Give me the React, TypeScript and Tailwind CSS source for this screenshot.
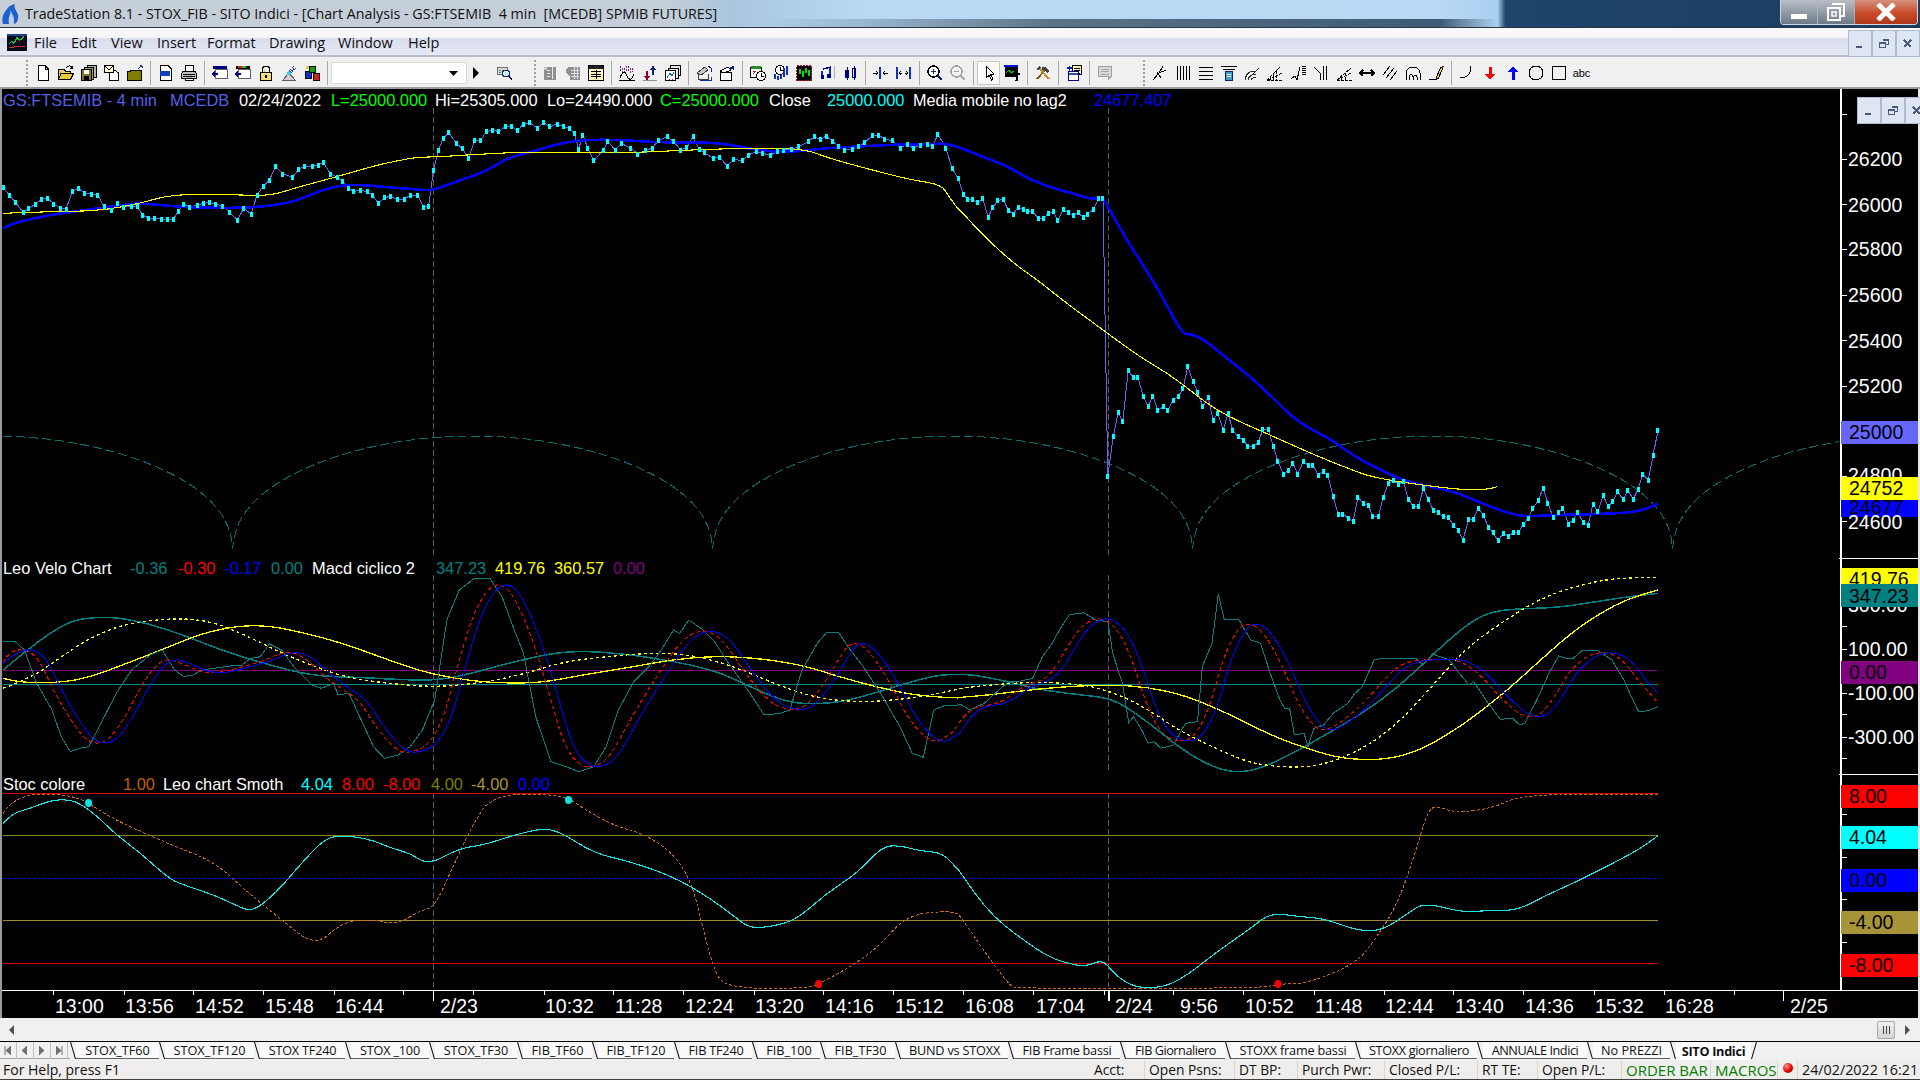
import React from "react";

type P = [number, number];
const z = (arr: number[], sx: number, ox: number, oy: number): P[] => {
  const out: P[] = [];
  for (let i = 0; i < arr.length; i += 2) out.push([ox + arr[i] / sx, oy + arr[i + 1] / 3]);
  return out;
};
const S9 = 1568 / 960;
const S8 = 1568 / 760;
const a = (l: number[], r: number[], top: number) => [...z(l, S9, 0, top), ...z(r, S8, 960, top)];
const pts = (p: P[]) => p.map(([x, y]) => `${x.toFixed(1)},${y.toFixed(1)}`).join(" ");
const smooth = (p: P[]) => {
  let d = `M${p[0][0].toFixed(1)} ${p[0][1].toFixed(1)}`;
  for (let i = 1; i < p.length - 1; i++) {
    const mx = (p[i][0] + p[i + 1][0]) / 2;
    const my = (p[i][1] + p[i + 1][1]) / 2;
    d += `Q${p[i][0].toFixed(1)} ${p[i][1].toFixed(1)} ${mx.toFixed(1)} ${my.toFixed(1)}`;
  }
  const e = p[p.length - 1];
  return d + `L${e[0].toFixed(1)} ${e[1].toFixed(1)}`;
};

const price = a(
  [5,262,15,285,26,308,38,338,47,325,58,312,68,298,78,295,88,312,98,325,108,327,118,275,128,265,138,280,150,282,160,285,170,320,182,332,192,310,202,322,214,318,224,320,233,345,243,355,253,355,263,357,273,357,283,357,291,335,300,312,310,322,322,316,332,310,342,308,352,312,364,318,375,338,388,360,398,325,410,342,420,285,430,258,440,240,450,200,462,222,478,232,488,208,498,198,510,198,520,195,528,187,540,222,552,232,560,245,570,265,578,275,588,270,600,275,608,285,618,310,628,292,638,290,650,298,660,298,670,285,682,285,692,322,700,318,708,210,716,150,724,115,733,98,745,130,755,145,765,175,775,122,785,120,795,95,805,90,815,95,825,80,835,78,845,92,855,72,865,68,878,85,888,68,898,80,910,72,920,80,930,85,938,100,945,148,952,105,960,145,970,182,985,150,993,125,1005,150,1015,130,1030,145,1042,162,1055,150,1065,145,1075,122,1090,110,1100,125,1112,150,1122,142,1132,110,1142,148,1150,158,1165,175,1175,172,1188,198,1198,178,1212,182,1222,165,1235,155,1245,160,1258,165,1270,155,1280,150,1293,148,1305,140,1320,125,1330,110,1340,118,1350,108,1360,125,1370,138,1380,150,1392,148,1402,140,1412,128,1425,107,1435,105,1445,118,1458,122,1470,145,1482,133,1492,145,1503,135,1515,132,1523,140,1532,102,1545,145,1555,205,1565,235],
  [7,282,15,298,26,298,37,308,47,295,58,352,68,322,78,302,89,298,100,332,110,342,120,322,130,328,140,335,150,335,161,354,172,356,182,340,192,335,202,360,213,328,223,338,234,345,244,338,254,352,264,342,275,328,286,296,295,296,305,1128,316,1010,326,938,336,963,347,812,357,832,367,832,378,888,388,920,398,888,408,932,419,920,429,930,440,900,450,890,460,865,470,800,481,845,491,878,501,920,512,892,522,960,532,940,543,990,553,940,563,992,574,1010,584,1020,594,1038,605,1040,615,1028,625,988,636,988,646,1038,656,1085,667,1122,677,1112,687,1090,697,1122,708,1085,718,1095,728,1095,739,1125,749,1115,759,1125,770,1190,780,1242,790,1242,801,1255,811,1265,821,1192,832,1210,842,1215,852,1250,863,1250,873,1192,884,1150,894,1142,904,1152,915,1145,925,1198,935,1218,946,1220,956,1165,966,1198,977,1232,987,1238,997,1250,1007,1252,1018,1275,1028,1292,1038,1320,1049,1258,1059,1258,1069,1225,1080,1245,1090,1282,1100,1298,1110,1322,1121,1300,1131,1310,1141,1298,1152,1298,1162,1272,1172,1255,1182,1225,1193,1202,1203,1165,1213,1210,1224,1253,1234,1238,1244,1225,1255,1272,1265,1260,1275,1238,1286,1268,1296,1275,1306,1212,1316,1235,1327,1185,1337,1220,1347,1205,1357,1175,1368,1198,1378,1172,1389,1197,1399,1168,1409,1122,1420,1140,1430,1065,1440,992],
  100
);
const blueMA = a(
  [5,385,20,370,50,358,80,345,120,335,160,325,200,315,225,310,250,313,290,320,340,323,380,324,420,321,450,315,480,305,510,282,540,262,570,254,600,256,640,263,680,268,705,272,730,255,760,235,785,220,810,195,835,170,870,155,900,138,930,125,960,119,1020,120,1060,126,1100,127,1150,127,1190,133,1220,145,1260,155,1300,155,1330,148,1370,142,1420,138,1470,133,1520,133,1545,130,1565,142],
  [0,143,50,172,100,200,130,228,180,260,240,283,265,296,295,296,300,306,340,410,375,490,410,570,458,702,475,702,500,715,540,762,600,832,640,885,680,945,720,985,765,1018,815,1070,860,1105,920,1145,1020,1175,1060,1200,1130,1240,1170,1250,1220,1245,1300,1243,1385,1238,1420,1225,1440,1210],
  100
);
const yellowMA = a(
  [5,340,75,335,160,333,230,310,265,290,305,283,380,284,440,288,480,265,520,245,570,220,610,198,650,182,680,172,720,170,790,162,870,155,950,159,1030,158,1100,152,1200,145,1310,145,1350,172,1400,198,1450,222,1490,240,1538,254,1550,290,1565,328],
  [0,330,50,410,115,495,160,540,220,610,300,695,370,770,440,830,530,935,640,1005,720,1058,800,1105,850,1132,950,1155,1040,1170,1090,1168,1108,1160],
  100
);
const tealFast = a(
  [5,245,25,245,40,270,60,370,85,450,100,530,115,575,130,565,145,560,165,490,190,400,215,330,245,285,265,270,285,330,300,350,315,345,330,330,350,325,375,318,395,315,410,295,425,290,440,252,460,270,480,320,510,375,525,385,545,370,552,405,570,400,590,480,610,560,628,595,650,585,670,560,690,510,710,420,730,180,750,90,775,55,800,55,820,110,840,210,855,280,875,470,900,605,925,620,945,635,970,620,990,560,1010,450,1035,365,1060,320,1080,270,1100,210,1110,220,1125,180,1145,205,1165,240,1190,310,1225,400,1248,465,1275,460,1290,450,1310,330,1335,250,1350,218,1370,218,1385,260,1410,320,1440,405,1470,500,1490,580,1508,592,1525,450,1545,435,1565,435],
  [0,432,20,450,50,430,80,390,100,365,120,365,150,355,170,290,190,250,205,210,225,165,255,158,280,180,305,185,315,280,335,370,348,488,358,470,375,510,388,550,400,545,415,565,440,555,465,490,490,485,500,320,520,250,533,102,545,178,575,178,600,240,620,250,640,340,660,420,670,445,680,445,690,525,710,520,718,560,730,505,750,495,770,460,800,430,815,400,830,380,855,298,890,295,905,295,940,295,955,315,975,282,1010,300,1030,340,1050,375,1060,365,1085,420,1115,478,1140,475,1155,495,1165,490,1190,420,1215,340,1235,288,1250,295,1265,295,1285,270,1315,270,1345,300,1370,360,1385,410,1400,455,1420,452,1440,440],
  560
);
const blueThin = a(
  [5,310,25,280,50,265,75,290,100,390,125,470,150,535,170,553,190,540,215,480,240,390,265,320,285,295,310,310,340,335,365,340,400,325,440,305,480,273,510,290,540,345,570,385,600,420,630,510,660,570,680,580,710,560,735,490,760,320,785,165,810,85,830,70,850,100,880,220,910,400,935,560,960,618,985,622,1010,590,1045,470,1085,350,1130,230,1165,208,1195,240,1230,340,1270,430,1305,452,1330,440,1360,370,1390,275,1405,245,1430,265,1465,360,1500,490,1540,555,1565,520],
  [0,520,25,465,50,440,80,435,110,420,150,375,190,360,215,320,250,230,280,183,310,173,340,205,370,290,400,430,430,520,470,548,500,530,530,450,560,290,590,205,610,188,640,210,680,310,710,420,740,490,765,515,800,490,850,430,890,360,930,305,1000,297,1040,298,1080,330,1130,410,1175,470,1210,470,1240,420,1270,340,1310,285,1350,275,1385,300,1420,370,1440,400],
  560
);
const redThin: P[] = blueThin.map(([x, y]) => [Math.max(3, x - 8), y] as P).filter(([x]) => x < 1650);
redThin.push([1658, 560 + 428 / 3]);
const yellowSlow = a(
  [5,355,30,368,100,368,150,350,200,315,270,265,330,220,390,197,440,197,500,220,560,250,620,290,680,330,740,355,800,368,880,370,950,345,1030,322,1100,298,1170,288,1240,295,1310,315,1370,350,1430,380,1490,405,1565,415],
  [0,412,60,405,130,392,200,382,270,376,350,376,420,390,480,415,560,465,640,525,720,568,790,597,880,600,950,570,1010,520,1060,470,1130,390,1190,310,1260,220,1320,160,1380,115,1440,90],
  560
);
const yellowDot = a(
  [5,385,50,355,100,290,150,230,200,195,250,180,300,175,350,187,400,225,450,270,500,310,560,350,630,370,710,382,790,368,860,340,920,305,1000,288,1070,278,1130,285,1200,320,1270,375,1340,418,1420,427,1500,412,1565,388],
  [0,385,60,375,150,366,220,370,270,378,330,405,390,450,450,510,520,560,590,605,650,620,720,622,780,600,850,550,910,480,970,385,1040,270,1110,195,1180,130,1240,92,1300,68,1360,54,1440,52],
  560
);
const tealSlow = a(
  [5,330,50,260,110,185,150,172,190,172,240,190,300,225,360,270,430,310,510,348,590,352,660,360,720,360,770,340,830,310,900,280,950,273,1010,280,1070,295,1130,315,1180,340,1230,385,1290,430,1350,432,1400,415,1470,375,1530,345,1565,343],
  [0,343,30,345,100,365,150,385,230,402,300,412,340,437,400,500,450,560,500,605,540,630,580,637,620,625,680,585,760,520,840,450,900,385,950,320,1000,250,1050,190,1090,158,1140,147,1230,143,1300,128,1370,112,1440,100],
  560
);
const cyanStoch = a(
  [5,790,20,760,50,745,80,722,110,718,130,730,160,770,190,825,230,880,275,955,300,975,350,1005,390,1040,413,1055,450,1000,490,915,525,845,550,825,600,835,640,865,670,880,700,915,750,865,790,855,840,825,885,805,915,815,970,880,1030,905,1100,950,1160,1015,1200,1070,1225,1105,1260,1100,1300,1080,1350,1000,1400,940,1440,860,1470,856,1500,872,1540,878,1565,930],
  [0,935,30,1000,70,1070,110,1118,175,1185,220,1210,260,1220,295,1198,320,1245,360,1283,420,1283,470,1245,530,1175,600,1105,640,1058,700,1070,750,1075,820,1112,870,1112,920,1065,957,1027,1035,1057,1080,1052,1150,1052,1210,1005,1280,960,1400,870,1440,827],
  560
);
const orange = a(
  [5,760,25,702,120,702,170,760,200,790,280,855,350,905,400,990,460,1080,515,1160,560,1085,610,1078,645,1095,690,1050,710,1040,740,920,770,800,805,702,920,702,960,755,1010,802,1050,820,1100,880,1130,970,1145,1080,1165,1225,1185,1285,1320,1285,1337,1272,1380,1230,1430,1170,1480,1067,1540,1053,1565,1060],
  [0,1070,30,1130,65,1205,105,1280,120,1285,620,1285,655,1272,720,1270,820,1208,860,1130,900,1040,935,900,965,750,985,738,1020,758,1100,745,1160,702,1440,702],
  560
);

const arcs = (() => {
  const out: P[] = [];
  for (let x = 3; x <= 1840; x += 1.5) {
    const s = Math.abs(Math.sin((Math.PI * (x - 232.7)) / 480));
    out.push([x, 557 - 121 * Math.pow(s, 0.4)]);
  }
  return out;
})();

const majorTicks = [53,124,193.5,263,334,403.5,473,544,613.6,683,754,823.6,893.5,963,1033.5,1104,1173,1243.5,1314,1384,1453.6,1523,1594,1664,1734];
const axisTicks = [114,159,204,249,295,340,386,431,476,521,605,626.5,649,693,714.6,737,758.6,814.5,857,899.4,942];

function ChartSvg() {
  return (
    <svg className="absolute inset-0" width="1920" height="929" viewBox="0 89 1920 929">
      <rect x="0" y="89" width="2" height="929" fill="#9a9a9a" />
      <rect x="1918" y="89" width="2" height="929" fill="#e8e8e8" />
      <g shapeRendering="crispEdges" fill="none">
        <path d="M433.5 108V555M433.5 575V770M433.5 793V987M1108.5 108V555M1108.5 575V770M1108.5 793V987" stroke="#5a5a5a" strokeDasharray="6 3" />
        <polyline points={pts(arcs)} stroke="#0b6e70" strokeDasharray="9 4" />
        <polyline points={pts(price)} stroke="#6d62ee" />
        <path d={smooth(blueMA)} stroke="#0000ff" strokeWidth="2.6" />
        <path d={smooth(yellowMA)} stroke="#ffff00" strokeWidth="1.1" />
        {price.map(([x, y], i) => (
          <rect key={i} x={x - 1.5} y={y - 2.5} width="3" height="5" fill="#00ffff" />
        ))}
        <path d="M3 670.5H1658" stroke="#800080" strokeWidth="1.5" />
        <path d="M3 684.5H1658" stroke="#008b8b" strokeWidth="1.5" />
        <path d={smooth(tealSlow)} stroke="#008080" strokeWidth="1.5" />
        <path d={smooth(yellowDot)} stroke="#ffff00" strokeWidth="1.3" strokeDasharray="3 3" />
        <path d={smooth(yellowSlow)} stroke="#ffff00" strokeWidth="1.3" />
        <polyline points={pts(tealFast)} stroke="#0b7f7f" />
        <path d={smooth(redThin)} stroke="#ff0000" strokeDasharray="4 3" />
        <path d={smooth(blueThin)} stroke="#0000ff" />
        <path d="M3 793.5H1658" stroke="#e00000" strokeWidth="1.4" />
        <path d="M3 835.5H1658" stroke="#86861a" strokeWidth="1.4" />
        <path d="M3 878.5H1658" stroke="#0000ff" strokeWidth="1.6" strokeDasharray="3 2" />
        <path d="M3 920.5H1658" stroke="#a08c30" strokeWidth="1.4" />
        <path d="M3 963.5H1658" stroke="#e00000" strokeWidth="1.4" />
        <path d={smooth(orange)} stroke="#cc6a10" strokeDasharray="3 2" />
        <path d={smooth(cyanStoch)} stroke="#19e6e6" strokeWidth="1.1" />
      </g>
      <ellipse cx="88.5" cy="803" rx="3.5" ry="4" fill="#00e8e8" />
      <ellipse cx="568.5" cy="800" rx="3.5" ry="4" fill="#00e8e8" />
      <ellipse cx="818.5" cy="984" rx="3.5" ry="4" fill="#ff0000" />
      <ellipse cx="1278" cy="984" rx="3.5" ry="4" fill="#ff0000" />
      <g stroke="#ffffff" shapeRendering="crispEdges" fill="none">
        <path d="M2 990.5H1918" strokeWidth="1.5" />
        <path d="M1841 89V990" strokeWidth="1.5" />
        <path d="M1839 558.5H1918M1839 774.5H1918" strokeWidth="1.5" />
        <path d="M433.5 991V1001M1109 991V1001M1783.5 991V1001" strokeWidth="1.5" />
        {majorTicks.map((x) => (
          <path key={x} d={`M${x} 991V995`} />
        ))}
        {axisTicks.map((y) => (
          <path key={y} d={`M1841 ${y}H1847`} />
        ))}
      </g>
    </svg>
  );
}

type L = { t: string; c: number; cls?: string; top?: number; h?: number };
const axis1: L[] = [
  { t: "26200", c: 159 }, { t: "26000", c: 204.5 }, { t: "25800", c: 249 }, { t: "25600", c: 295 }, { t: "25400", c: 340.5 }, { t: "25200", c: 386 },
  { t: "25000", c: 432.5, cls: "bg-[#6666ff] text-black", top: 421, h: 23 },
  { t: "24800", c: 475 },
  { t: "24677", c: 507, cls: "bg-[#0000ff] text-black", top: 500, h: 17 },
  { t: "24752", c: 488.5, cls: "bg-[#ffff00] text-black", top: 477, h: 23 },
  { t: "24600", c: 522 },
];
const axis2: L[] = [
  { t: "419.76", c: 579, cls: "bg-[#ffff00] text-black", top: 568, h: 16 },
  { t: "300.00", c: 605 },
  { t: "347.23", c: 596, cls: "bg-[#008080] text-black", top: 584, h: 23 },
  { t: "100.00", c: 649 },
  { t: "0.00", c: 672.5, cls: "bg-[#800080] text-black", top: 661, h: 23 },
  { t: "-100.00", c: 693 },
  { t: "-300.00", c: 737 },
];
const axis3: L[] = [
  { t: "8.00", c: 796, cls: "bg-[#ff0000] text-black", top: 784.5, h: 23 },
  { t: "4.04", c: 837.5, cls: "bg-[#00ffff] text-black", top: 826, h: 23 },
  { t: "0.00", c: 880.5, cls: "bg-[#0000ff] text-black", top: 869, h: 23 },
  { t: "-4.00", c: 922.5, cls: "bg-[#a89438] text-black", top: 911, h: 23 },
  { t: "-8.00", c: 965.5, cls: "bg-[#ff0000] text-black", top: 954, h: 23 },
];

function AxisCol({ items, top }: { items: L[]; top: number }) {
  return (
    <div className="relative w-[77px] shrink-0 font-['Liberation_Sans',sans-serif] text-[19.5px]">
      {items.map((l) =>
        l.cls ? (
          <div
            key={l.t + l.c}
            className={`absolute left-0 right-0 overflow-hidden pl-[8px] ${l.cls}`}
            style={{ top: (l.top as number) - top, height: l.h, lineHeight: `${(l.c - (l.top as number)) * 2}px` }}
          >
            {l.t}
          </div>
        ) : (
          <div
            key={l.t}
            className="absolute left-0 right-0 h-[24px] pl-[7px] leading-[24px] whitespace-nowrap text-white"
            style={{ top: l.c - top - 12 }}
          >
            {l.t}
          </div>
        )
      )}
    </div>
  );
}

function LegendRow1() {
  return (
    <div className="flex h-[23px] items-center pl-[3px] font-['Liberation_Sans',sans-serif] text-[16.4px] whitespace-nowrap">
      <span className="w-[167px] text-[#5460e8]">GS:FTSEMIB - 4 min</span>
      <span className="w-[69px] text-[#5460e8]">MCEDB</span>
      <span className="w-[92px] text-white">02/24/2022</span>
      <span className="w-[104px] text-[#00ff00]">L=25000.000</span>
      <span className="w-[112px] text-white">Hi=25305.000</span>
      <span className="w-[113px] text-white">Lo=24490.000</span>
      <span className="w-[109px] text-[#00ff00]">C=25000.000</span>
      <span className="w-[58px] text-white">Close</span>
      <span className="w-[86px] text-[#00ffff]">25000.000</span>
      <span className="w-[181px] text-[16.2px] text-white">Media mobile no lag2</span>
      <span className="text-[#0000ff]">24677.407</span>
    </div>
  );
}
function LegendRow2() {
  return (
    <div className="flex h-[20px] items-center pl-[3px] font-['Liberation_Sans',sans-serif] text-[16.4px] whitespace-nowrap">
      <span className="w-[127px] text-white">Leo Velo Chart</span>
      <span className="w-[48px] text-[#008080]">-0.36</span>
      <span className="w-[46px] text-[#ff0000]">-0.30</span>
      <span className="w-[47px] text-[#0000ff]">-0.17</span>
      <span className="w-[41px] text-[#008080]">0.00</span>
      <span className="w-[124px] text-white">Macd ciclico 2</span>
      <span className="w-[59px] text-[#008080]">347.23</span>
      <span className="w-[59px] text-[#ffff00]">419.76</span>
      <span className="w-[59px] text-[#ffff00]">360.57</span>
      <span className="text-[#800080]">0.00</span>
    </div>
  );
}
function LegendRow3() {
  return (
    <div className="flex h-[20px] items-center pl-[3px] font-['Liberation_Sans',sans-serif] text-[16.4px] whitespace-nowrap">
      <span className="w-[120px] text-white">Stoc colore</span>
      <span className="w-[40px] text-[#c06000]">1.00</span>
      <span className="w-[138px] text-white">Leo chart Smoth</span>
      <span className="w-[41px] text-[#00ffff]">4.04</span>
      <span className="w-[41px] text-[#ff0000]">8.00</span>
      <span className="w-[48px] text-[#ff0000]">-8.00</span>
      <span className="w-[40px] text-[#808000]">4.00</span>
      <span className="w-[47px] text-[#a89438]">-4.00</span>
      <span className="text-[#0000ff]">0.00</span>
    </div>
  );
}

function TimeAxis() {
  const c = "shrink-0 w-[70px]";
  return (
    <div className="absolute bottom-0 left-0 right-0 flex h-[23px] items-center pl-[55px] font-['Liberation_Sans',sans-serif] text-[19.5px] text-white whitespace-nowrap">
      <span className={c}>13:00</span>
      <span className={c}>13:56</span>
      <span className={c}>14:52</span>
      <span className={c}>15:48</span>
      <span className="w-[105px] shrink-0">16:44</span>
      <span className="w-[105px] shrink-0">2/23</span>
      <span className={c}>10:32</span>
      <span className={c}>11:28</span>
      <span className={c}>12:24</span>
      <span className={c}>13:20</span>
      <span className={c}>14:16</span>
      <span className={c}>15:12</span>
      <span className="w-[71px] shrink-0">16:08</span>
      <span className="w-[79px] shrink-0">17:04</span>
      <span className="w-[65px] shrink-0">2/24</span>
      <span className="w-[65px] shrink-0">9:56</span>
      <span className={c}>10:52</span>
      <span className={c}>11:48</span>
      <span className={c}>12:44</span>
      <span className={c}>13:40</span>
      <span className={c}>14:36</span>
      <span className={c}>15:32</span>
      <span className="w-[125px] shrink-0">16:28</span>
      <span>2/25</span>
    </div>
  );
}

/* ---- toolbar icons ---- */
const O = "#000";
const I: Record<string, React.ReactNode> = {
  new: <path d="M3.5 .5H10L13.5 4V15.5H3.5Z M10 .5V4H13.5" fill="#fff" stroke={O} />,
  open: <><path d="M.5 14.5V4.5H6L7.5 6H12.5V8" fill="#f0d060" stroke={O} /><path d="M.5 14.5L3 8.5H15.5L12.5 14.5Z" fill="#e8c838" stroke={O} /><path d="M8 3C10 0 13 0 14 3M14 1V3.5H12" fill="none" stroke={O} /></>,
  saveall: <><rect x="6.5" y=".5" width="9" height="12" fill="#b0b0b0" stroke={O} /><rect x="3.5" y="2.5" width="9" height="12" fill="#a09858" stroke={O} /><rect x=".5" y="4.5" width="10" height="11" fill="#807828" stroke={O} /><rect x="3" y="5" width="5" height="4" fill="#fff" /><rect x="3" y="11" width="5" height="4" fill={O} /></>,
  clip: <><path d="M5.5 5.5H11L14.5 8V15.5H5.5Z" fill="#fff" stroke={O} /><rect x=".5" y=".5" width="9" height="7" fill="#fff8d0" stroke={O} /><path d="M1 1L5 5L9 1" fill="none" stroke={O} /></>,
  box: <><path d="M.5 15.5V6.5H3L4.5 5H14.5V15.5Z" fill="#808000" stroke={O} /><path d="M11 4L15 .5M15 .5H12.5M15 .5V3" stroke="#1030a0" fill="none" /></>,
  preview: <><path d="M2.5 .5H10L13.5 4V15.5H2.5Z" fill="#fff" stroke={O} /><rect x="2" y="6" width="10" height="5" fill="#1040c0" /></>,
  print: <><rect x="4.5" y=".5" width="8" height="6" fill="#fff" stroke={O} /><path d="M1.5 6.5H14.5L15.5 9.5V13.5H.5V9.5Z" fill="#c0c0c0" stroke={O} /><path d="M2 9H14M2 11H14" stroke={O} /><rect x="4.5" y="13" width="8" height="2.5" fill="#fff" stroke={O} /></>,
  win1: <><rect x="1" y="1" width="14" height="3" fill="#000080" /><rect x="3.5" y="4.5" width="12" height="9" fill="#fff" stroke="#606060" /><path d="M.5 9H6M3 6.5L.5 9L3 11.5" fill="none" stroke="#000080" strokeWidth="1.4" /></>,
  win2: <><rect x="1" y="1" width="14" height="3" fill="#000" /><rect x="3" y="1" width="4" height="2" fill="#e02020" /><rect x="7" y="1" width="4" height="2" fill="#20c020" /><rect x="3.5" y="4.5" width="12" height="9" fill="#fff" stroke="#606060" /><path d="M.5 9H6M3 6.5L.5 9L3 11.5" fill="none" stroke="#000080" strokeWidth="1.4" /></>,
  lock: <><path d="M4.5 7V4C4.5 .5 11.5 .5 11.5 4V7" fill="none" stroke={O} strokeWidth="1.2" /><path d="M6 7V4.5" stroke="#d8c020" /><rect x="2.5" y="7" width="11" height="8.5" fill="#f0e070" stroke={O} /><rect x="7" y="10" width="2" height="3" fill={O} /></>,
  sat: <><path d="M2 15L8 8L14 15Z" fill="#d0d0d0" stroke="#606060" /><circle cx="8" cy="8" r="2" fill="#30d0e0" /><path d="M8 6L13 1M9 7L15 2M10 8L15.5 3" stroke="#2040c0" strokeDasharray="1 1" /></>,
  cube: <><rect x="1" y="6" width="6" height="7" fill="#1030c0" stroke={O} /><rect x="5" y="1" width="6" height="6" fill="#10a010" stroke={O} /><rect x="9" y="8" width="6" height="7" fill="#d02020" stroke={O} /><rect x="2" y="1" width="3" height="3" fill="#e8d020" /></>,
  find: <><rect x=".5" y="2.5" width="10" height="7" fill="#d8d8d8" stroke="#707070" /><path d="M2 5H9M2 7H9" stroke="#707070" strokeDasharray="2 1" /><circle cx="9" cy="8.5" r="3.5" fill="#c8f0f8" stroke="#203070" /><path d="M11.5 11L15 14.5" stroke="#000080" strokeWidth="2" /></>,
  g1: <><rect x="1.5" y="1.5" width="12" height="13" fill="#909090" /><path d="M10 2V14M5 5H8M5 8H8M5 11H8" stroke="#e8e8e8" /><rect x="2" y="2" width="3" height="3" fill="#c8c8c8" /></>,
  g2: <><path d="M1 4L5 1.5H14.5V14.5H5V11L1 8Z" fill="#909090" /><path d="M6 5H14M6 8H14M6 11H14M9 2V14M12 2V14" stroke="#e0e0e0" /></>,
  tab: <><rect x=".5" y=".5" width="15" height="15" fill="#fff8c0" stroke={O} /><rect x="1" y="1" width="14" height="3" fill="#202020" /><path d="M3 6.5H13M3 9H13M3 11.5H13M8 5V14" stroke={O} /></>,
  wave: <><path d="M1 1V7M5 3V7M9 1V7M13 3V7" stroke="#2030c0" strokeDasharray="2 1" /><path d="M3 3V8M7 1V7M11 3V8" stroke="#d02020" strokeDasharray="2 1" /><path d="M1 13C4 5 6 6 8 11S13 15 15 9" fill="none" stroke={O} /><path d="M0 15H16" stroke={O} /></>,
  updn: <><path d="M5 6V13M3 11L5 14L7 11" stroke="#900020" fill="none" strokeWidth="1.5" /><path d="M11 3V10M9 5L11 2L13 5" stroke="#102080" fill="none" strokeWidth="1.5" /><path d="M1 15H15" stroke="#909090" /></>,
  windows: <><rect x="5.5" y=".5" width="10" height="10" fill="#e8e8e8" stroke={O} /><rect x="3" y="3" width="10" height="10" fill="#e8e8e8" stroke={O} /><rect x=".5" y="5.5" width="10" height="10" fill="#fff" stroke={O} /><path d="M2 13L5 8L7 11L9 7" fill="none" stroke="#1060c0" /><path d="M4 14H5M7 14H8" stroke="#d02020" /></>,
  fill1: <><path d="M1 8L9 2L12 5L5 10Z" fill="#c8c8c8" stroke="#404040" /><path d="M2 9V14H12V9" fill="none" stroke="#404040" /><path d="M12 1L15 3L15 7" stroke="#102080" fill="none" /><path d="M4 15H15V12" stroke="#1030a0" fill="none" /></>,
  fill2: <><path d="M1 6L9 2L12 5L5 8Z" fill="#fff" stroke={O} /><rect x="1.5" y="7.5" width="11" height="8" fill="#fff" stroke={O} /><path d="M10 3L15 .5V5Z" fill="#102080" /></>,
  cal: <><rect x=".5" y="2.5" width="11" height="10" fill="#fff" stroke={O} /><rect x="1" y="1" width="10" height="3" fill="#209020" /><path d="M3 6H5M3 9L6 6" stroke="#d02020" /><circle cx="11" cy="11" r="4.5" fill="#fff" stroke={O} /><path d="M11 8V11H14" stroke={O} fill="none" /></>,
  magbars: <><circle cx="7" cy="5" r="4.5" fill="#fff" stroke={O} /><path d="M7 2V5H10" stroke={O} fill="none" /><path d="M2 9V14M5 11V15M8 10V14M11 3V12M14 1V10" stroke="#1030c0" strokeWidth="1.4" /></>,
  blackchart: <><rect x=".5" y=".5" width="15" height="15" fill="#000" stroke="#a02020" strokeDasharray="2 1" /><path d="M4 4V9M7 6V12M10 3V8M13 5V11" stroke="#00e000" strokeWidth="1.4" /></>,
  music: <><path d="M3 6V12M11 3V10" stroke="#1030a0" strokeWidth="2" /><rect x="1.5" y="10" width="3" height="4" fill="#000080" /><rect x="8" y="9" width="4" height="4" fill="#000080" /><path d="M4 4L12 2" stroke="#000080" strokeWidth="1.5" /><path d="M15 1V14" stroke="#b0b0b0" /></>,
  candles: <><rect x="3" y="5" width="4" height="8" fill="#000080" /><path d="M5 2V15" stroke="#000080" /><rect x="10.5" y="3.5" width="3" height="9" fill="#f0f0f0" stroke="#000080" /><path d="M12 1V15" stroke="#000080" /></>,
  lr: <><path d="M7 2V14" stroke="#1030c0" strokeWidth="1.4" /><path d="M0 8H5M3 6L5 8L3 10M10 8H15M12 6L10 8L12 10" stroke={O} fill="none" /></>,
  rl: <><path d="M1 2V14M14 2V14" stroke="#1030c0" strokeWidth="1.4" /><path d="M3 8H6M5 6L3 8L5 10M9 8H12M10 6L12 8L10 10" stroke={O} fill="none" /></>,
  zin: <><circle cx="6.5" cy="6.5" r="5.5" fill="#fff" stroke={O} strokeWidth="1.5" /><path d="M4 6.5H9M6.5 4V9" stroke="#0a3090" strokeWidth="1.5" /><path d="M10.5 10.5L15 15" stroke="#102080" strokeWidth="2.4" /></>,
  zout: <><circle cx="6.5" cy="6.5" r="5.5" fill="#f4f4f4" stroke="#a0a0a0" strokeWidth="1.5" /><path d="M4 6.5H9" stroke="#a0a0a0" strokeWidth="1.5" /><path d="M10.5 10.5L15 15" stroke="#a8a8a8" strokeWidth="2.4" /></>,
  cursor: <path d="M5 1V13L8 10.5L10.5 15L12 14L9.5 9.5L13 9Z" fill="#fff" stroke={O} />,
  chartT: <><rect x=".5" y=".5" width="13" height="11" fill="#000" /><rect x="0" y="0" width="14" height="2" fill="#0010e0" /><path d="M2 8L5 5L7 8L10 6" stroke="#00d000" fill="none" /><path d="M9 9H16M12.5 9V16M11 16H14" stroke="#000" strokeWidth="2" fill="none" /></>,
  tools: <><path d="M2 14L11 4" stroke="#806020" strokeWidth="2" /><path d="M7 2L11 2L14 6L12 8L9 5L7 5Z" fill="#404040" /><path d="M4 3L14 14" stroke="#c09030" strokeWidth="2" /><path d="M2 5L5 2" stroke="#404040" strokeWidth="2" /></>,
  addwin: <><rect x="6.5" y=".5" width="9" height="9" fill="#fff8a0" stroke={O} /><path d="M8 3H14M8 5.5H14M8 8H14" stroke="#000" /><rect x="2.5" y="6.5" width="10" height="9" fill="#fff" stroke="#000080" /><path d="M1 3H6M3.5 .5V5.5" stroke="#0020c0" strokeWidth="1.6" /><rect x="3" y="8" width="9" height="2" fill="#3050b0" /></>,
  note: <><path d="M1.5 1.5H14.5V11L11 14.5V11.5H1.5Z" fill="#d8d8d8" stroke="#a0a0a0" /><path d="M4 4H12M4 6.5H12M4 9H12" stroke="#a8a8a8" /></>,
  d1: <path d="M1 15L7 8M7 8L11 1M7 8L14 5M5 7L9 13" stroke={O} fill="none" />,
  d2: <path d="M2 1V15M5 1V15M8 1V15M11 1V15M14 1V15" stroke={O} />,
  d3: <path d="M1 2H15M1 6H15M1 10H15M1 14H15" stroke={O} />,
  d4: <><path d="M0 1.5H16M2 4H14" stroke={O} /><rect x="4.5" y="6.5" width="7" height="9" fill="#40a0c0" stroke="#102080" /><path d="M6 9H10M6 11.5H10" stroke="#fff" /></>,
  d5: <path d="M1 15C2 8 7 5 12 7M4 15C5 11 8 9 12 10M7 15C8 13 10 12 12 13M4 14L15 3" stroke="#303030" fill="none" />,
  d6: <path d="M0 15H16M0 15L14 1M1 15L15 8M3 12V15M6 9V15M9 6V15" stroke={O} fill="none" strokeDasharray="3 1" />,
  d7: <path d="M1 14L5 11L7 15L10 2M12 1H16M12 3H16M12 5H16M12 7H16M12 9H16" stroke={O} fill="none" />,
  d8: <path d="M1 2L7 8V15M10 1V15M13 1V15" stroke={O} fill="none" />,
  d9: <path d="M1 15H16M1 15L15 3M1 15L15 8M5 12V15M9 8V15" stroke={O} fill="none" strokeDasharray="3 1" />,
  d10: <path d="M1 8H15M4 5L1 8L4 11M12 5L15 8L12 11" stroke={O} fill="none" strokeWidth="1.5" />,
  d11: <path d="M1 10L8 1M4 13L12 3M8 15L15 6" stroke={O} fill="none" />,
  d12: <path d="M1 15V8C1 0 15 0 15 8V15M4 15V12C4 9 8 9 8 12V15C8 9 12 9 12 12V15" stroke={O} fill="none" />,
  d13: <><path d="M1 14H9" stroke={O} /><path d="M8 13L13 2L15 3L10 14Z" fill="#f0d020" stroke={O} /><path d="M13 2L15 3L15.5 1.5L14 1Z" fill="#a01010" /></>,
  e1: <path d="M12 1C12 9 8 13 1 13" stroke={O} fill="none" />,
  e2: <path d="M6.5 2H9.5V9H13L8 15L3 9H6.5Z" fill="#ff0000" />,
  e3: <path d="M8 1L13 7H9.5V15H6.5V7H3Z" fill="#0000ff" />,
  e4: <circle cx="8" cy="8" r="7" fill="none" stroke={O} />,
  e5: <rect x="1.5" y="1.5" width="13" height="13" fill="none" stroke={O} />,
};

const Slot = ({ n, active }: { n: string; active?: boolean }) => (
  <div className={`flex h-[24px] w-[23px] shrink-0 items-center justify-center ${active ? "border border-[#c8c8c8] bg-[#fafafa]" : ""}`}>
    <svg width="16" height="16" viewBox="0 0 16 16" shapeRendering="crispEdges">{I[n]}</svg>
  </div>
);
const Sep = () => (
  <div className="flex h-[24px] w-[8px] shrink-0 justify-center">
    <div className="h-full w-px bg-[#a8a8a8]" />
  </div>
);
const Grip = ({ cls }: { cls: string }) => (
  <div className={`flex h-[26px] shrink-0 justify-center ${cls}`}>
    <div className="h-full w-[2px] border-l-2 border-dotted border-[#a0a0a0]" />
  </div>
);

function Toolbar() {
  const g1 = ["new","open","saveall","clip","box"];
  const g2 = ["preview","print"];
  const g3 = ["win1","win2","lock","sat","cube"];
  const g4 = ["g1","g2","tab"];
  const g6 = ["fill1","fill2"];
  const g7 = ["cal","magbars","blackchart","music","candles"];
  const g8 = ["lr","rl"];
  const g9 = ["zin","zout"];
  const g10 = ["d1","d2","d3","d4","d5","d6","d7","d8","d9","d10","d11","d12","d13"];
  const g11 = ["e1","e2","e3","e4","e5"];
  const r = (l: string[]) => l.map((n) => <Slot key={n} n={n} />);
  return (
    <div className="flex h-[32px] shrink-0 items-center border-b-2 border-[#9c9c9c] bg-[#f0f0f0] pl-[22px] pt-[2px]">
      <Grip cls="w-[9px]" />
      {r(g1)}<Sep />{r(g2)}<Sep />{r(g3)}<Sep />
      <div className="flex h-[22px] w-[136px] shrink-0 items-center justify-end rounded-[2px] border border-[#d8d8d8] bg-white pr-[8px]">
        <svg width="9" height="5" viewBox="0 0 9 5"><path d="M0 0H9L4.5 5Z" fill="#000" /></svg>
      </div>
      <div className="flex w-[26px] shrink-0 justify-start pl-[6px]">
        <svg width="6" height="12" viewBox="0 0 6 12"><path d="M0 0L6 6L0 12Z" fill="#000" /></svg>
      </div>
      <Slot n="find" />
      <div className="w-[16px] shrink-0" />
      <Grip cls="w-[6px]" />
      {r(g4)}<Sep />
      <Slot n="wave" /><Slot n="updn" /><Slot n="windows" /><Sep />
      {r(g6)}<Sep />{r(g7)}<Sep />{r(g8)}<Sep />{r(g9)}<Sep />
      <Slot n="cursor" active /><Slot n="chartT" /><Sep />
      <Slot n="tools" /><Sep /><Slot n="addwin" /><Sep /><Slot n="note" />
      <div className="w-[24px] shrink-0" />
      <Grip cls="w-[8px]" />
      {r(g10)}<Sep />{r(g11)}
      <div className="flex h-[24px] w-[23px] shrink-0 items-center justify-center font-['Liberation_Sans',sans-serif] text-[11px] text-black">abc</div>
    </div>
  );
}

const WinBtn = ({ k }: { k: "min" | "max" | "x" }) => (
  <div className="flex h-[27px] w-[24px] shrink-0 items-center justify-center border border-[#aebcd0] bg-[#dfe6f3]">
    <svg width="12" height="12" viewBox="0 0 12 12" shapeRendering="crispEdges">
      {k === "min" && <rect x="2" y="8" width="6" height="2" fill="#4a5a78" />}
      {k === "max" && <path d="M4.5 1.5H10.5V6.5H8M1.5 4.5H7.5V9.5H1.5ZM1.5 5.5H7.5M4.5 2.5H10.5" fill="none" stroke="#4a5a78" />}
      {k === "x" && <path d="M2 2L9 9M9 2L2 9" stroke="#4a5a78" strokeWidth="2" />}
    </svg>
  </div>
);

const tabs: [string, string][] = [
  ["STOX_TF60", "w-[83px]"],
  ["STOX_TF120", "w-[89px]"],
  ["STOX TF240", "w-[85px] tracking-[-0.2px]"],
  ["STOX _100", "w-[78px] tracking-[-0.2px]"],
  ["STOX_TF30", "w-[82px]"],
  ["FIB_TF60", "w-[69px]"],
  ["FIB_TF120", "w-[76px]"],
  ["FIB TF240", "w-[72px] tracking-[-0.2px]"],
  ["FIB_100", "w-[62px]"],
  ["FIB_TF30", "w-[69px]"],
  ["BUND vs STOXX", "w-[107px] tracking-[-0.2px]"],
  ["FIB Frame bassi", "w-[106px] tracking-[-0.25px]"],
  ["FIB Giornaliero", "w-[99px] tracking-[-0.47px]"],
  ["STOXX frame bassi", "w-[124px] tracking-[-0.2px]"],
  ["STOXX giornaliero", "w-[116px] tracking-[-0.34px]"],
  ["ANNUALE Indici", "w-[104px] tracking-[-0.45px]"],
  ["No PREZZI", "w-[77px]"],
];
const Slash = () => (
  <svg width="6" height="17" viewBox="0 0 6 17" className="shrink-0"><path d="M0.5 0L5.5 17" stroke="#000" /></svg>
);
const Slash2 = () => (
  <svg width="6" height="17" viewBox="0 0 6 17" className="shrink-0"><path d="M5.5 0L0.5 17" stroke="#000" /></svg>
);

export default function App() {
  return (
    <div className="flex h-[1080px] w-[1920px] flex-col overflow-hidden bg-[#f0f0f0] font-['Open_Sans',sans-serif]">
      {/* title */}
      <div className="relative flex h-[28px] shrink-0 items-center border-b border-[#2a3644] bg-[linear-gradient(90deg,#c6cfd8_0%,#c3ced9_35%,#aac6de_38%,#b9d8f3_45%,#b8d8f5_75%,#a9d0f0_78%,#1f456b_78.4%,#1b3c60_100%)]">
        <div className="absolute inset-x-0 bottom-0 h-[8px] bg-[linear-gradient(90deg,transparent_40%,#5a7286_55%,#3e5a76_75%,transparent_78%)]" />
        <svg width="18" height="22" viewBox="0 0 18 22" className="relative ml-[1px] shrink-0">
          <path d="M2 21C0 14 3 10 6 6C8 3 10 2 14 1C12 4 16 8 17 12C18 17 15 21 13 21C14 16 11 12 10 9C8 13 7 17 8 21Z" fill="#1f5fd0" />
          <path d="M9 8C12 12 13 16 12 20" stroke="#9cc4f4" fill="none" />
        </svg>
        <span className="relative ml-[6px] whitespace-pre text-[14.28px] text-[#101010]">TradeStation 8.1 - STOX_FIB - SITO Indici - [Chart Analysis - GS:FTSEMIB  4 min  [MCEDB] SPMIB FUTURES]</span>
        <div className="absolute right-[2px] top-0 flex h-[25px] w-[138px] overflow-hidden rounded-b-[4px] border border-t-0 border-[#cfd8e0]">
          <div className="flex w-[37px] items-end justify-center border-r border-[#a8b4c0] bg-[linear-gradient(#b8bec6,#6e7a88)] pb-[5px]">
            <div className="h-[5px] w-[16px] bg-white" />
          </div>
          <div className="flex w-[37px] items-center justify-center border-r border-[#a8b4c0] bg-[linear-gradient(#b8bec6,#6e7a88)]">
            <svg width="18" height="18" viewBox="0 0 18 18"><path d="M5 1H17V13H14M1 5H13V17H1Z" fill="none" stroke="#fff" strokeWidth="2" /><rect x="5" y="9" width="4" height="4" fill="none" stroke="#fff" strokeWidth="1.5" /></svg>
          </div>
          <div className="flex flex-1 items-center justify-center bg-[linear-gradient(#d89080,#c84a28_55%,#b03818)]">
            <svg width="20" height="18" viewBox="0 0 20 18"><path d="M2 1L18 17M18 1L2 17" stroke="#fff" strokeWidth="5" /></svg>
          </div>
        </div>
      </div>
      {/* menu */}
      <div className="flex h-[29px] shrink-0 items-center border-b-2 border-[#b8bcc8] bg-[linear-gradient(#f9f9fb,#f6f6f8_35%,#d9deee_40%,#e6e8f4)] pt-[2px] text-[14.5px] text-[#101010]">
        <svg width="20" height="17" viewBox="0 0 20 17" className="ml-[7px] mr-[7px] shrink-0" shapeRendering="crispEdges">
          <rect width="20" height="17" fill="#0a0a1a" />
          <rect width="20" height="2" fill="#204090" />
          <path d="M2 10L5 7L7 9L10 4L13 6L17 3" stroke="#20c040" fill="none" strokeWidth="1.4" />
          <path d="M2 13H7L11 12H18" stroke="#d03030" fill="none" />
        </svg>
        <span className="w-[37px]">File</span>
        <span className="w-[40px]">Edit</span>
        <span className="w-[46px]">View</span>
        <span className="w-[50px]">Insert</span>
        <span className="w-[62px]">Format</span>
        <span className="w-[69px]">Drawing</span>
        <span className="w-[70px]">Window</span>
        <span>Help</span>
        <div className="-mb-[2px] ml-auto flex self-end">
          <WinBtn k="min" /><WinBtn k="max" /><WinBtn k="x" />
        </div>
      </div>
      <Toolbar />
      {/* chart */}
      <div className="relative h-[929px] shrink-0 bg-black">
        <ChartSvg />
        <div className="relative flex h-[469px]">
          <div className="w-[1841px] shrink-0"><LegendRow1 /></div>
          <AxisCol items={axis1} top={89} />
        </div>
        <div className="relative flex h-[216px]">
          <div className="w-[1841px] shrink-0"><LegendRow2 /></div>
          <AxisCol items={axis2} top={558} />
        </div>
        <div className="relative flex h-[216px]">
          <div className="w-[1841px] shrink-0"><LegendRow3 /></div>
          <AxisCol items={axis3} top={774} />
        </div>
        <TimeAxis />
        <div className="absolute left-[1857px] top-[8px] flex">
          <WinBtn k="min" /><WinBtn k="max" /><WinBtn k="x" />
        </div>
      </div>
      {/* scrollbar */}
      <div className="flex h-[23px] shrink-0 items-center justify-between bg-[#f0f0f0] pl-[9px] pr-[10px]">
        <svg width="5" height="10" viewBox="0 0 5 10"><path d="M5 0L0 5L5 10Z" fill="#505050" /></svg>
        <div className="flex items-center gap-[10px]">
          <div className="flex h-[18px] w-[18px] items-center justify-center gap-[2px] rounded-[2px] border border-[#a8a8a8] bg-[linear-gradient(#f0f0f0,#d4d4d4)]">
            <div className="h-[8px] w-px bg-[#404040]" />
            <div className="h-[8px] w-px bg-[#404040]" />
            <div className="h-[8px] w-px bg-[#404040]" />
          </div>
          <svg width="5" height="10" viewBox="0 0 5 10"><path d="M0 0L5 5L0 10Z" fill="#505050" /></svg>
        </div>
      </div>
      {/* tabs */}
      <div className="flex h-[19px] shrink-0 items-start border-t border-[#000] bg-[#f0f0f0] text-[12.7px] leading-[17px] text-[#101010]">
        <div className="flex h-[17px] w-[70px] shrink-0 items-center border-b border-[#a0a0a0]">
          {["M1 0V9M7 0L2 4.5L7 9","M6 0L1 4.5L6 9","M1 0L6 4.5L1 9","M1 0L6 4.5L1 9M7 0V9"].map((d) => (
            <div key={d} className="flex h-[17px] w-[17px] items-center justify-center border-r border-[#c0c0c0]">
              <svg width="8" height="9" viewBox="0 0 8 9"><path d={d} fill="#707070" stroke="#707070" /></svg>
            </div>
          ))}
        </div>
        {tabs.map(([t, w]) => (
          <React.Fragment key={t}>
            <Slash />
            <span className={`flex h-[17px] shrink-0 items-center justify-center whitespace-nowrap border-b border-[#606060] bg-[#fafafa] ${w}`}>{t}</span>
          </React.Fragment>
        ))}
        <Slash />
        <span className="flex h-[18px] w-[75px] shrink-0 items-center justify-center whitespace-nowrap bg-white tracking-[-0.3px] font-bold">SITO Indici</span>
        <Slash2 />
      </div>
      {/* status */}
      <div className="flex h-[20px] shrink-0 items-center border-b border-[#404040] bg-[#f0eeec] pt-[1px] text-[13.8px] leading-[18px] text-[#101010]">
        <span className="w-[1094px] shrink-0 pl-[3px] text-[14px]">For Help, press F1</span>
        <span className="w-[50px] shrink-0">Acct:</span>
        {[
          ["w-[90px]", "Open Psns:"],
          ["w-[63px]", "DT BP:"],
          ["w-[87px]", "Purch Pwr:"],
          ["w-[93px]", "Closed P/L:"],
          ["w-[60px]", "RT TE:"],
          ["w-[84px]", "Open P/L:"],
        ].map(([w, t]) => (
          <span key={t} className={`${w} h-full shrink-0 whitespace-nowrap border-l border-[#d8d4d0] pl-[4px]`}>{t}</span>
        ))}
        <span className="h-full w-[89px] shrink-0 whitespace-nowrap border-l border-[#d8d4d0] pl-[4px] text-[15px] text-[#008000]">ORDER BAR</span>
        <span className="h-full w-[67px] shrink-0 whitespace-nowrap border-l border-[#d8d4d0] pl-[4px] text-[15px] text-[#008000]">MACROS</span>
        <div className="flex h-full w-[20px] shrink-0 items-center justify-center border-l border-[#d8d4d0]">
          <div className="mb-[4px] h-[10px] w-[10px] rounded-full bg-[radial-gradient(circle_at_35%_30%,#ff9090,#e00000_55%,#800000)]" />
        </div>
        <span className="h-full whitespace-nowrap border-l border-[#d8d4d0] pl-[4px] text-[14.3px]">24/02/2022 16:21</span>
      </div>
    </div>
  );
}
